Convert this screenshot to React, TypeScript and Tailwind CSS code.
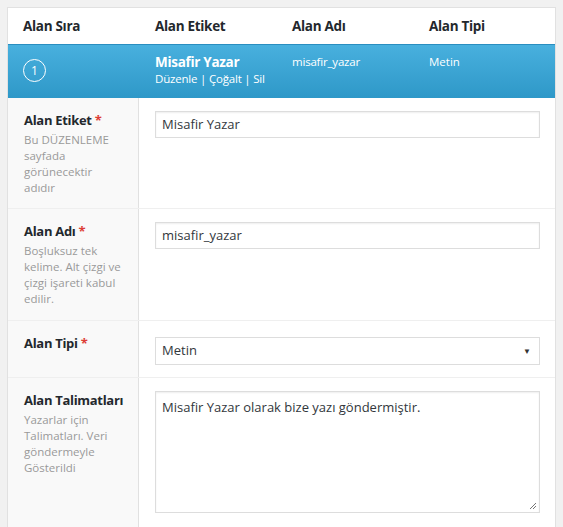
const font = { fontFamily: '"Open Sans", "Noto Sans", Arial, sans-serif' };

function Req() {
  return <span className="text-[#dd3d36]"> *</span>;
}

function FieldRow({
  label,
  required,
  desc,
  children,
  className,
}: {
  label: string;
  required?: boolean;
  desc?: string[];
  children: React.ReactNode;
  className?: string;
}) {
  return (
    <div className={`flex border-b border-[#efefef] ${className ?? ''}`}>
      <div className="w-[131px] shrink-0 bg-[#f9f9f9] border-r border-[#e1e1e1] pl-[16px] pr-2 pt-[13px]">
        <div className="text-[13px] font-bold text-[#23282d] leading-[18px] tracking-[-0.3px]">
          {label}
          {required && <Req />}
        </div>
        {desc && (
          <div className="mt-[3px] text-[11.5px] leading-[16px] text-[#999]">
            {desc.map((d) => (
              <div key={d}>{d}</div>
            ))}
          </div>
        )}
      </div>
      <div className="flex-1 pl-[16px] pr-[15px] pt-[13px]">{children}</div>
    </div>
  );
}

export default function App() {
  return (
    <div className="min-h-[527px] bg-[#f1f1f1] pt-[7px] pl-[7px] w-[563px] overflow-hidden" style={font}>
      <div className="w-[549px] border border-[#e1e1e1] border-b-0 bg-white h-[520px] overflow-hidden">
        {/* header */}
        <div className="flex h-[36px] items-center text-[13.5px] font-bold text-[#23282d] tracking-[-0.3px]">
          <div className="w-[147px] pl-[15px]">Alan Sıra</div>
          <div className="w-[137px]">Alan Etiket</div>
          <div className="w-[137px]">Alan Adı</div>
          <div>Alan Tipi</div>
        </div>
        {/* active row */}
        <div className="-mx-px flex h-[54px] border-t border-[#2a8ec0] bg-gradient-to-b from-[#48b0de] to-[#2e98c8] text-white">
          <div className="w-[148px] pl-[16px] pt-[14px]">
            <div className="flex h-[23px] w-[23px] items-center justify-center rounded-full border border-white text-[12px]">
              1
            </div>
          </div>
          <div className="w-[137px] pt-[8px]">
            <div className="text-[13.5px] font-bold leading-[18px] tracking-[-0.3px]">Misafir Yazar</div>
            <div className="text-[11.5px] leading-[16px] tracking-[-0.2px]">Düzenle | Çoğalt | Sil</div>
          </div>
          <div className="w-[137px] pt-[8px] text-[11.5px] leading-[18px] tracking-[-0.2px]">misafir_yazar</div>
          <div className="pt-[8px] text-[11.5px] leading-[18px]">Metin</div>
        </div>
        <FieldRow
          label="Alan Etiket"
          required
          desc={['Bu DÜZENLEME', 'sayfada', 'görünecektir', 'adıdır']}
          className="h-[111px]"
        >
          <div className="h-[27px] border border-[#dddddd] px-[6px] text-[13px] leading-[25px] text-[#32373c] shadow-[inset_0_1px_2px_rgba(0,0,0,0.07)]">
            Misafir Yazar
          </div>
        </FieldRow>
        <FieldRow
          label="Alan Adı"
          required
          desc={['Boşluksuz tek', 'kelime. Alt çizgi ve', 'çizgi işareti kabul', 'edilir.']}
          className="h-[112px]"
        >
          <div className="h-[27px] border border-[#dddddd] px-[6px] text-[13px] leading-[25px] text-[#32373c] shadow-[inset_0_1px_2px_rgba(0,0,0,0.07)]">
            misafir_yazar
          </div>
        </FieldRow>
        <FieldRow label="Alan Tipi" required className="h-[57px]">
          <div className="mt-[3px] flex h-[28px] items-center justify-between border border-[#dddddd] pl-[6px] pr-[8px] text-[13px] text-[#32373c]">
            <span>Metin</span>
            <span className="text-[8px] text-[#333]">▼</span>
          </div>
        </FieldRow>
        <FieldRow
          label="Alan Talimatları"
          desc={['Yazarlar için', 'Talimatları. Veri', 'göndermeyle', 'Gösterildi']}
          className="h-[150px] border-b-0"
        >
          <div className="relative h-[122px] border border-[#dddddd] px-[6px] pt-[6px] text-[13px] leading-[18px] text-[#32373c] shadow-[inset_0_1px_2px_rgba(0,0,0,0.07)]">
            Misafir Yazar olarak bize yazı göndermiştir.
            <svg className="absolute bottom-[2px] right-[2px]" width="8" height="8" viewBox="0 0 8 8">
              <path d="M7 1 L1 7 M7 4 L4 7" stroke="#777" strokeWidth="1" />
            </svg>
          </div>
        </FieldRow>
      </div>
    </div>
  );
}
